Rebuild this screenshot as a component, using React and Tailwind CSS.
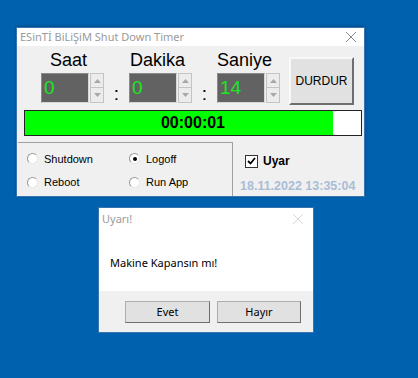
import React from 'react';

const sans = { fontFamily: '"Liberation Sans", Arial, sans-serif' };
const ui = { fontFamily: '"Noto Sans", "Open Sans", sans-serif' };

function Arrow({ up }) {
  return (
    <svg width="7" height="4" viewBox="0 0 7 4">
      <path d={up ? 'M0 4 L3.5 0 L7 4 Z' : 'M0 0 L3.5 4 L7 0 Z'} fill="#a8a8a8" />
    </svg>
  );
}

function TimeField({ label, value, labelClass }) {
  return (
    <div className="flex flex-col w-[63px]">
      <div className={`h-[20px] text-[18px] leading-[20px] text-black ${labelClass}`} style={sans}>{label}</div>
      <div className="mt-[3px] flex gap-[1px]">
        <div className="w-[48px] h-[30px] bg-[#626262] border border-t-[#8a8a8a] border-l-[#8a8a8a] border-b-[#d8d8d8] border-r-[#d8d8d8] pl-[2px] text-[19px] leading-[28px] text-[#1ee61e]" style={sans}>{value}</div>
        <div className="w-[14px] h-[30px] flex flex-col">
          <div className="h-[15px] flex items-center justify-center bg-[#ececec] border border-[#c4c4c4]"><Arrow up /></div>
          <div className="h-[15px] flex items-center justify-center bg-[#ececec] border border-[#c4c4c4] border-t-0"><Arrow /></div>
        </div>
      </div>
    </div>
  );
}

function Colon() {
  return (
    <div className="w-[25px] self-end flex justify-center text-[19px] leading-[20px] text-black pb-[1px]" style={sans}>:</div>
  );
}

function Radio({ label, checked }) {
  return (
    <div className="flex items-center gap-[6px] h-[19px]">
      <div className="w-[11px] h-[11px] rounded-full bg-white border border-t-[#9a9a9a] border-l-[#9a9a9a] border-b-[#e8e8e8] border-r-[#e8e8e8] flex items-center justify-center">
        {checked && <div className="w-[4px] h-[4px] rounded-full bg-black" />}
      </div>
      <span className="text-[11px] text-black" style={sans}>{label}</span>
    </div>
  );
}

function WinButton({ children, className }) {
  return (
    <div className={`flex items-center justify-center bg-[#e1e1e1] border border-[#adadad] border-b-[#6e6e6e] border-r-[#6e6e6e] text-black ${className}`}>
      {children}
    </div>
  );
}

export default function App() {
  return (
    <div className="relative w-[418px] h-[378px] overflow-hidden bg-[#0062af]">
      {/* main window */}
      <div className="absolute left-[16px] top-[27px] w-[349px] h-[170px] border border-[#3a73ad] flex flex-col shadow-[0_-1px_3px_rgba(0,0,0,0.25)]">
        <div className="h-[21px] bg-white flex items-center justify-between pl-[3px] pr-[8px]">
          <span className="text-[11px] text-[#9a9a9a]" style={ui}>ESinTİ BiLiŞiM Shut Down Timer</span>
          <svg width="10" height="10" viewBox="0 0 10 10"><path d="M0 0 L10 10 M10 0 L0 10" stroke="#8a8a8a" strokeWidth="1" /></svg>
        </div>
        <div className="flex-1 bg-[#f0f0f0] flex flex-col">
          <div className="flex items-start pt-[4px] pl-[24px]">
            <TimeField label="Saat" value="0" labelClass="ml-[9px]" />
            <Colon />
            <TimeField label="Dakika" value="0" labelClass="ml-[1px]" />
            <Colon />
            <TimeField label="Saniye" value="14" labelClass="" />
            <WinButton className="ml-[9px] mt-[7px] w-[65px] h-[48px] text-[12px] border-2 border-t-[#f8f8f8] border-l-[#f8f8f8]">
              <span style={sans}>DURDUR</span>
            </WinButton>
          </div>
          <div className="mt-[5px] ml-[7px] mr-[2px] h-[26px] border border-[#222] bg-white relative">
            <div className="h-full w-[308px] bg-[#00ff00]" />
            <div className="absolute inset-0 flex items-center justify-center text-[16px] font-bold text-black" style={sans}>00:00:01</div>
          </div>
          <div className="flex mt-[6px] flex-1">
            <div className="ml-[1px] w-[215px] border-t border-r border-[#a0a0a0] pl-[9px] pt-[6px] grid grid-cols-[102px_1fr]">
              <Radio label="Shutdown" />
              <Radio label="Logoff" checked />
              <Radio label="Reboot" />
              <Radio label="Run App" />
            </div>
            <div className="flex flex-col pl-[7px] pt-[10px]">
              <div className="flex items-center gap-[5px] ml-[5px]">
                <div className="w-[13px] h-[13px] bg-white border border-[#333] flex items-center justify-center">
                  <svg width="9" height="8" viewBox="0 0 9 8"><path d="M1 4 L3.5 6.5 L8 1" stroke="#000" strokeWidth="1.8" fill="none" /></svg>
                </div>
                <span className="text-[12px] font-bold text-black" style={sans}>Uyar</span>
              </div>
              <div className="mt-[7px] text-[12.5px] font-bold text-[#a9bdd6]" style={sans}>18.11.2022 13:35:04</div>
            </div>
          </div>
        </div>
      </div>

      {/* dialog */}
      <div className="absolute left-[98px] top-[207px] w-[216px] h-[126px] border border-[#3a73ad] flex flex-col">
        <div className="h-[22px] bg-white flex items-center justify-between pl-[3px] pr-[10px]">
          <span className="text-[11px] text-[#9a9a9a]" style={ui}>Uyarı!</span>
          <svg width="10" height="10" viewBox="0 0 10 10"><path d="M0 0 L10 10 M10 0 L0 10" stroke="#d6d6d6" strokeWidth="1" /></svg>
        </div>
        <div className="h-[61px] bg-white flex items-center pl-[11px] pt-[6px]">
          <span className="text-[11px] text-black" style={ui}>Makine Kapansın mı!</span>
        </div>
        <div className="flex-1 bg-[#f0f0f0] flex items-start pt-[10px] pl-[26px] gap-[7px]">
          <WinButton className="w-[85px] h-[22px] text-[11px]"><span style={ui}>Evet</span></WinButton>
          <WinButton className="w-[84px] h-[22px] text-[11px]"><span style={ui}>Hayır</span></WinButton>
        </div>
      </div>
    </div>
  );
}
